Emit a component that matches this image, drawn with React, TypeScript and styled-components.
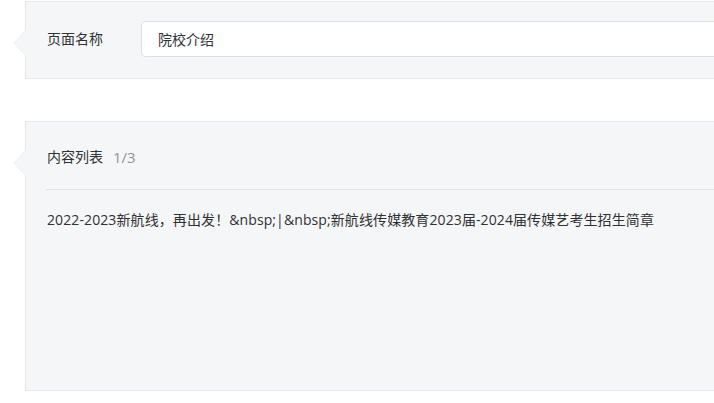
import React from "react";
import styled, { createGlobalStyle } from "styled-components";

const Global = createGlobalStyle`
  html, body { margin: 0; padding: 0; background: #fff; overflow: hidden; }
  body { font-family: "Open Sans", "Noto Sans CJK SC", sans-serif; color: #303133; }
`;

const Page = styled.div`
  display: flex;
  flex-direction: column;
  gap: 42px;
  padding: 1px 0 0 25px;
  width: 900px;
`;

const Panel = styled.section<{ $height: number }>`
  position: relative;
  box-sizing: border-box;
  height: ${(p) => p.$height}px;
  background: #f5f6f8;
  border: 1px solid #e4e6eb;
`;

const Arrow = styled.svg`
  position: absolute;
  left: -13px;
  top: 28px;
  width: 14px;
  height: 26px;
`;

const FieldRow = styled.div`
  display: flex;
  align-items: center;
  padding: 19px 0 19px 21px;
`;

const Label = styled.span`
  width: 94px;
  font-size: 14px;
  line-height: 22px;
  color: #303133;
`;

const Input = styled.div`
  box-sizing: border-box;
  flex: 1;
  height: 36px;
  display: flex;
  align-items: center;
  padding-left: 16px;
  background: #fff;
  border: 1px solid #dcdfe6;
  border-radius: 4px;
  font-size: 14px;
  color: #303133;
`;

const Header = styled.div`
  display: flex;
  align-items: center;
  gap: 10px;
  margin-left: 20px;
  padding: 24px 0 21px 1px;
  border-bottom: 1px solid #e1e3e8;
  font-size: 14px;
  line-height: 22px;
`;

const Count = styled.span`
  color: #909399;
  font-size: 15px;
`;

const Item = styled.div`
  padding: 19px 0 0 21px;
  font-size: 14px;
  line-height: 22px;
  letter-spacing: 0.1px;
  color: #303133;
  white-space: nowrap;
`;

const PanelArrow = () => (
  <Arrow viewBox="0 0 14 26">
    <polygon points="13,0 1,13 13,26" fill="#f5f6f8" />
    <polyline points="13,0 1,13 13,26" fill="none" stroke="#eceef1" strokeWidth="1" />
    <rect x="12.5" y="0" width="2" height="26" fill="#f5f6f8" />
  </Arrow>
);

export default function App() {
  return (
    <>
      <Global />
      <Page>
        <Panel $height={78}>
          <PanelArrow />
          <FieldRow>
            <Label>页面名称</Label>
            <Input>院校介绍</Input>
          </FieldRow>
        </Panel>
        <Panel $height={270}>
          <PanelArrow />
          <Header>
            <span>内容列表</span>
            <Count>1/3</Count>
          </Header>
          <Item>2022-2023新航线，再出发！&amp;nbsp;|&amp;nbsp;新航线传媒教育2023届-2024届传媒艺考生招生简章</Item>
        </Panel>
      </Page>
    </>
  );
}
